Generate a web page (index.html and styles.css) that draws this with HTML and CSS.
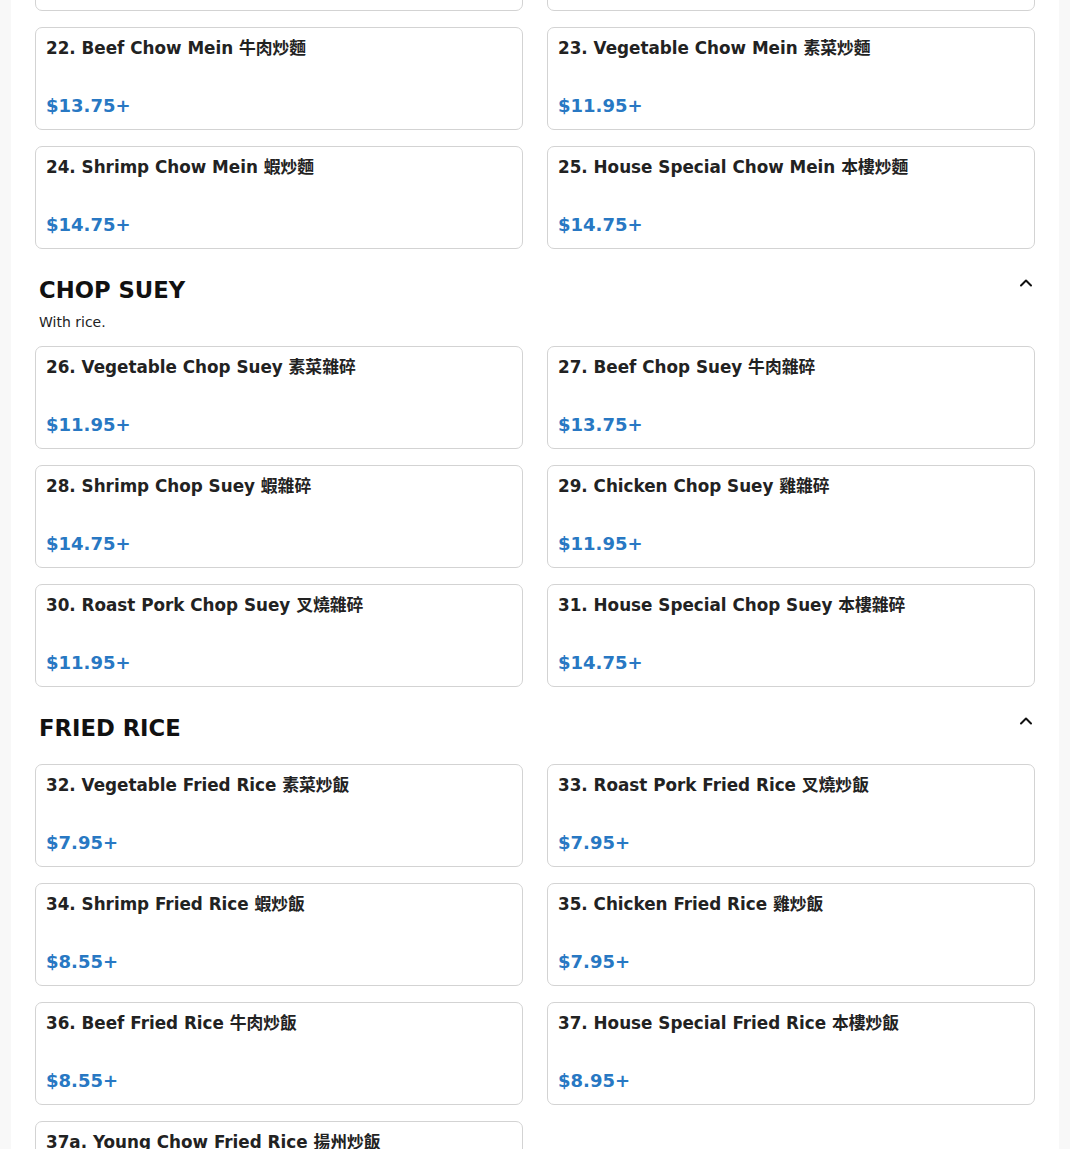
FILE: index.html
```html
<!DOCTYPE html>
<html lang="en">
<head>
<meta charset="utf-8">
<title>Menu</title>
<link rel="stylesheet" href="styles.css">
</head>
<body>
<main class="page">
  <section class="section section-first">
    <div class="grid grid-offset">
      <div class="card card-stub" aria-hidden="true"></div>
      <div class="card card-stub" aria-hidden="true"></div>
      <div class="card"><div class="item-name">22. Beef Chow Mein 牛肉炒麵</div><div class="item-price">$13.75+</div></div>
      <div class="card"><div class="item-name">23. Vegetable Chow Mein 素菜炒麵</div><div class="item-price">$11.95+</div></div>
      <div class="card"><div class="item-name">24. Shrimp Chow Mein 蝦炒麵</div><div class="item-price">$14.75+</div></div>
      <div class="card"><div class="item-name">25. House Special Chow Mein 本樓炒麵</div><div class="item-price">$14.75+</div></div>
    </div>
  </section>

  <section class="section">
    <div class="section-head">
      <h2 class="section-title">CHOP SUEY</h2>
      <button class="toggle" type="button" aria-label="Collapse"><svg width="16" height="16" viewBox="0 0 16 16"><polyline points="3,10.5 8,5.5 13,10.5" fill="none" stroke="#111" stroke-width="2" stroke-linecap="round" stroke-linejoin="round"/></svg></button>
    </div>
    <p class="section-desc">With rice.</p>
    <div class="grid">
      <div class="card"><div class="item-name">26. Vegetable Chop Suey 素菜雜碎</div><div class="item-price">$11.95+</div></div>
      <div class="card"><div class="item-name">27. Beef Chop Suey 牛肉雜碎</div><div class="item-price">$13.75+</div></div>
      <div class="card"><div class="item-name">28. Shrimp Chop Suey 蝦雜碎</div><div class="item-price">$14.75+</div></div>
      <div class="card"><div class="item-name">29. Chicken Chop Suey 雞雜碎</div><div class="item-price">$11.95+</div></div>
      <div class="card"><div class="item-name">30. Roast Pork Chop Suey 叉燒雜碎</div><div class="item-price">$11.95+</div></div>
      <div class="card"><div class="item-name">31. House Special Chop Suey 本樓雜碎</div><div class="item-price">$14.75+</div></div>
    </div>
  </section>

  <section class="section">
    <div class="section-head section-head-nodesc">
      <h2 class="section-title">FRIED RICE</h2>
      <button class="toggle" type="button" aria-label="Collapse"><svg width="16" height="16" viewBox="0 0 16 16"><polyline points="3,10.5 8,5.5 13,10.5" fill="none" stroke="#111" stroke-width="2" stroke-linecap="round" stroke-linejoin="round"/></svg></button>
    </div>
    <div class="grid">
      <div class="card"><div class="item-name">32. Vegetable Fried Rice 素菜炒飯</div><div class="item-price">$7.95+</div></div>
      <div class="card"><div class="item-name">33. Roast Pork Fried Rice 叉燒炒飯</div><div class="item-price">$7.95+</div></div>
      <div class="card"><div class="item-name">34. Shrimp Fried Rice 蝦炒飯</div><div class="item-price">$8.55+</div></div>
      <div class="card"><div class="item-name">35. Chicken Fried Rice 雞炒飯</div><div class="item-price">$7.95+</div></div>
      <div class="card"><div class="item-name">36. Beef Fried Rice 牛肉炒飯</div><div class="item-price">$8.55+</div></div>
      <div class="card"><div class="item-name">37. House Special Fried Rice 本樓炒飯</div><div class="item-price">$8.95+</div></div>
      <div class="card"><div class="item-name">37a. Young Chow Fried Rice 揚州炒飯</div><div class="item-price">$8.95+</div></div>
    </div>
  </section>
</main>
</body>
</html>
```

FILE: styles.css
```css
html, body {
  margin: 0;
  padding: 0;
}

body {
  background: #f8f8f8;
  font-family: "DejaVu Sans", "Noto Sans CJK TC", sans-serif;
  color: #222;
}

.page {
  width: 1048px;
  margin: 0 auto;
  padding: 0 24px 40px;
  box-sizing: border-box;
  background: #fff;
  min-height: 1149px;
}

.section {
  padding-top: 27px;
}

.section-first {
  padding-top: 0;
}

.grid {
  display: grid;
  grid-template-columns: 1fr 1fr;
  column-gap: 24px;
  row-gap: 16px;
}

.grid-offset {
  margin-top: -92px;
}

.card {
  border: 1px solid #d3d3d3;
  border-radius: 7px;
  padding: 10px 10px 13px;
  background: #fff;
}

.card-stub {
  height: 103px;
  box-sizing: border-box;
}

.item-name {
  font-size: 16.8px;
  line-height: 20px;
  font-weight: 700;
  color: #222;
  margin-bottom: 37px;
  white-space: nowrap;
}

.item-price {
  font-size: 18px;
  line-height: 21px;
  font-weight: 700;
  color: #2878c3;
}

.section-head {
  display: flex;
  justify-content: space-between;
  align-items: flex-start;
  padding: 0 1px 0 4px;
  margin-bottom: 10px;
}

.section-head-nodesc {
  margin-bottom: 22px;
}

.section-title {
  margin: 0;
  font-size: 22.7px;
  line-height: 28px;
  font-weight: 700;
  color: #111;
  letter-spacing: 0;
}

.toggle {
  border: 0;
  background: transparent;
  padding: 0;
  margin-top: -1px;
  width: 16px;
  height: 16px;
  cursor: pointer;
}

.toggle svg {
  display: block;
}

.section-desc {
  margin: 0 0 16px;
  padding-left: 4px;
  font-size: 14px;
  line-height: 16px;
  color: #222;
}
```
